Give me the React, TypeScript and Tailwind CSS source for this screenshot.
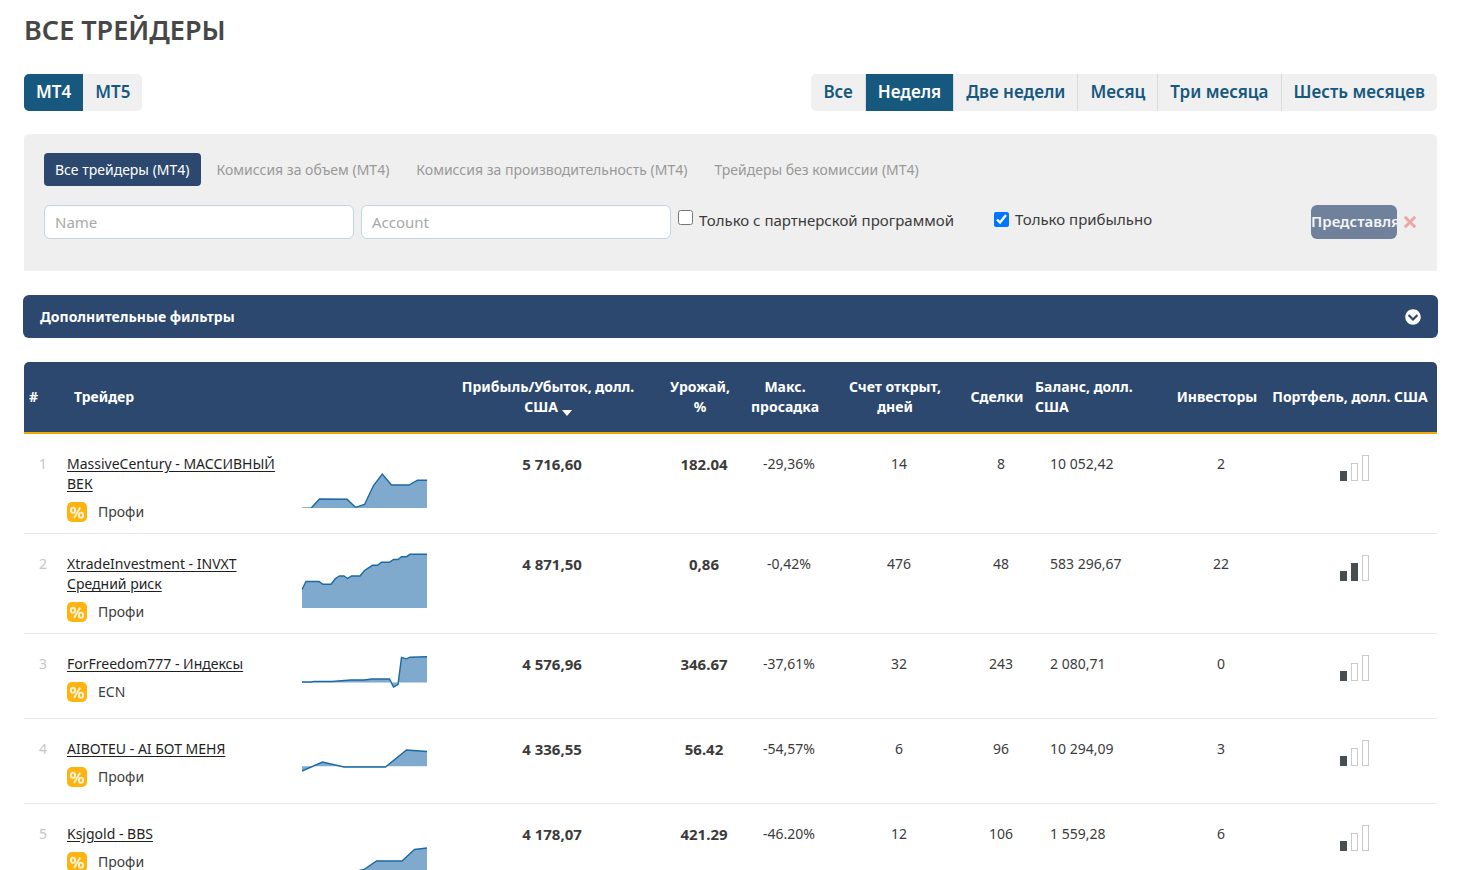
import { useState } from 'react'
import type { ReactNode } from 'react'
import { FaChevronCircleDown } from 'react-icons/fa'

type Trader = {
  name: string
  type: string
  profit: string
  gain: string
  drawdown: string
  days: string
  deals: string
  balance: string
  investors: string
  level: number
  line: string
  base: number
}

// line points and baseline are in the 125x55 box of the sparkline
const traders: Trader[] = [
  {
    name: "MassiveCentury - МАССИВНЫЙ ВЕК",
    type: "Профи",
    profit: "5 716,60",
    gain: "182.04",
    drawdown: "-29,36%",
    days: "14",
    deals: "8",
    balance: "10 052,42",
    investors: "2",
    level: 1,
    line: "0,55.3 9,55.3 17.5,46 45,46.3 53.5,54.3 62.5,51.5 71.5,32.5 80.3,21 89.5,32 107,32 115.5,27.2 125,27.2",
    base: 55,
  },
  {
    name: "XtradeInvestment - INVXT Средний риск",
    type: "Профи",
    profit: "4 871,50",
    gain: "0,86",
    drawdown: "-0,42%",
    days: "476",
    deals: "48",
    balance: "583 296,67",
    investors: "22",
    level: 2,
    line: "0,36.5 4,28.5 17,28.5 21,31.3 29,31.3 33.5,25.5 37.5,23 42,23 45.5,25.5 49.5,23 58,23 62.5,17.5 70.5,12.3 75.5,12.3 79.5,9.3 87.5,9.3 91.5,6.5 96,6.5 99.5,3.7 104.5,3.7 108,1.3 125,1.3",
    base: 55,
  },
  {
    name: "ForFreedom777 - Индексы",
    type: "ECN",
    profit: "4 576,96",
    gain: "346.67",
    drawdown: "-37,61%",
    days: "32",
    deals: "243",
    balance: "2 080,71",
    investors: "0",
    level: 1,
    line: "0,29 9,29 12,28.5 30,28.5 49,27 62,27 70,26 87.5,26 91.5,34 96,31.5 99.5,4.3 104.5,5.8 108,4.2 125,3.8",
    base: 29.5,
  },
  {
    name: "AIBOTEU - AI БОТ МЕНЯ",
    type: "Профи",
    profit: "4 336,55",
    gain: "56.42",
    drawdown: "-54,57%",
    days: "6",
    deals: "96",
    balance: "10 294,09",
    investors: "3",
    level: 1,
    line: "0,33 20.5,24 42,29 83.5,29 104.5,12 125,13.5",
    base: 28.3,
  },
  {
    name: "Ksjgold - BBS",
    type: "Профи",
    profit: "4 178,07",
    gain: "421.29",
    drawdown: "-46.20%",
    days: "12",
    deals: "106",
    balance: "1 559,28",
    investors: "6",
    level: 1,
    line: "0,51 50,49 62,46.5 74.5,38 100,38 112.5,26.5 125,25",
    base: 55,
  },
]

const Sparkline = ({ line, base }: { line: string; base: number }) => (
  <svg width="125" height="55" viewBox="0 0 125 55" className="block">
    <polygon points={`0,${base} ${line} 125,${base}`} fill="#7faacd" />
    <polyline points={line} fill="none" stroke="#1b69a5" strokeWidth="1.4" />
  </svg>
)

const Level = ({ level }: { level: number }) => {
  const bars = [
    { x: 0, h: 10 },
    { x: 11, h: 18 },
    { x: 22, h: 26 },
  ]

  return (
    <svg width="31" height="26" viewBox="0 0 31 26" className="mx-auto block">
      {bars.map(({ x, h }, i) => i < level ? (
        <rect key={x} x={x + 1} y={26 - h} width="7" height={h} fill="#474e52" />
      ) : (
        <rect key={x} x={x + 1.5} y={26.5 - h} width="6" height={h - 1} fill="#fff" stroke="#cbcbcb" />
      ))}
    </svg>
  )
}

const Percent = () => (
  <svg width="20" height="20" viewBox="0 0 20 20" className="shrink-0">
    <rect width="20" height="20" rx="5" fill="#ffb30f" />
    <g fill="none" stroke="#fff3d6" strokeWidth="1.9">
      <ellipse cx="6" cy="8.3" rx="2.1" ry="2.6" />
      <ellipse cx="14" cy="13.2" rx="2.1" ry="2.6" />
      <path d="M13.2 5.4 7 16" />
    </g>
  </svg>
)

const Tab = ({ active, onClick, children }: { active: boolean; onClick: () => void; children: ReactNode }) => (
  <button
    onClick={onClick}
    className={`h-[37px] px-3 text-[17px] font-semibold whitespace-nowrap ${active ? "bg-[#17587f] text-white" : "bg-[#f0f0f0] text-[#17587f]"}`}
  >{children}</button>
)

const periods = ["Все", "Неделя", "Две недели", "Месяц", "Три месяца", "Шесть месяцев"]
const groups = [
  "Все трейдеры (МТ4)",
  "Комиссия за объем (МТ4)",
  "Комиссия за производительность (МТ4)",
  "Трейдеры без комиссии (МТ4)",
]

const App = () => {
  const [platform, setPlatform] = useState("MT4");
  const [period, setPeriod] = useState("Неделя");
  const [group, setGroup] = useState(groups[0]);
  const [name, setName] = useState("");
  const [account, setAccount] = useState("");
  const [partner, setPartner] = useState(false);
  const [profitable, setProfitable] = useState(true);

  const reset = () => {
    setName("");
    setAccount("");
    setPartner(false);
  }

  return (
    <div className="h-screen overflow-hidden bg-white pt-3 pr-[23px] pl-6 font-['Noto_Sans',sans-serif] text-sm text-[#3b3b3b]">
      <h1 className="text-[27px] leading-9 font-semibold text-[#474747]">ВСЕ ТРЕЙДЕРЫ</h1>

      <div className="mt-[26px] flex justify-between">
        <div className="flex overflow-hidden rounded-[5px]">
          {["MT4", "MT5"].map((p) => (
            <Tab key={p} active={p === platform} onClick={() => setPlatform(p)}>{p}</Tab>
          ))}
        </div>
        <div className="flex divide-x divide-[#d5dde3] overflow-hidden rounded-[5px]">
          {periods.map((p) => (
            <Tab key={p} active={p === period} onClick={() => setPeriod(p)}>{p}</Tab>
          ))}
        </div>
      </div>

      <div className="mt-[23px] rounded-t-[5px] bg-[#efefef] px-5 pt-[19px] pb-8">
        <div className="flex gap-[5px]">
          {groups.map((g) => (
            <button
              key={g}
              onClick={() => setGroup(g)}
              className={`h-[33px] rounded px-[11px] whitespace-nowrap ${g === group ? "bg-[#2c486e] text-white" : "text-[#999]"}`}
            >{g}</button>
          ))}
        </div>
        <div className="mt-[19px] flex items-start">
          <input
            value={name}
            onChange={({ target: { value } }) => setName(value)}
            aria-label="Name"
            className="h-[34px] w-[310px] rounded-md border border-[#c3d4de] bg-white px-[10px] text-[15px] placeholder:text-[#a9a9a9]"
            placeholder="Name"
          />
          <input
            value={account}
            onChange={({ target: { value } }) => setAccount(value)}
            aria-label="Account"
            className="ml-[7px] h-[34px] w-[310px] rounded-md border border-[#c3d4de] bg-white px-[10px] text-[15px] placeholder:text-[#a9a9a9]"
            placeholder="Account"
          />
          <label className="ml-[7px] flex items-start gap-[6px] pt-[5px] text-[15px] leading-5 whitespace-nowrap">
            <input type="checkbox" checked={partner} onChange={() => setPartner(!partner)} className="size-[15px]" />
            Только с партнерской программой
          </label>
          <label className="ml-10 flex items-center gap-[6px] pt-1 text-[15px] leading-5 whitespace-nowrap">
            <input type="checkbox" checked={profitable} onChange={() => setProfitable(!profitable)} className="size-[15px]" />
            Только прибыльно
          </label>
          <button className="ml-auto flex h-[34px] w-[86px] items-center overflow-hidden rounded-md bg-[#70819b] text-[15px] font-semibold text-[#f4f5f7]">Представля</button>
          <button onClick={reset} aria-label="Сбросить" className="ml-[6px] flex h-[34px] items-center">
            <svg width="14" height="14" viewBox="0 0 14 14">
              <path d="M1.8 1.8 12.2 12.2M12.2 1.8 1.8 12.2" stroke="#eba7a5" strokeWidth="3" />
            </svg>
          </button>
        </div>
      </div>

      <button className="-mx-px mt-6 flex h-[43px] w-[calc(100%+2px)] items-center justify-between rounded-md bg-[#2c486e] px-[17px] font-bold text-white">
        Дополнительные фильтры
        <FaChevronCircleDown size={16} />
      </button>

      <table className="mt-6 w-full table-fixed border-separate border-spacing-0">
        <colgroup>
          <col className="w-[30px]" />
          <col />
          <col className="w-[152px]" />
          <col className="w-[216px]" />
          <col className="w-[88px]" />
          <col className="w-[82px]" />
          <col className="w-[138px]" />
          <col className="w-[66px]" />
          <col className="w-[141px]" />
          <col className="w-[92px]" />
          <col className="w-[174px]" />
        </colgroup>
        <thead>
          <tr className="text-center leading-5 text-white *:h-[72px] *:border-b-2 *:border-[#f0ab00] *:bg-[#2c486e] *:px-[5px] *:font-bold">
            <th className="rounded-tl-[5px] text-left">#</th>
            <th colSpan={2} className="text-left"><span className="pl-[15px]">Трейдер</span></th>
            <th>
              <span className="mx-auto block w-[190px]">
                Прибыль/Убыток, долл. США
                <svg width="10" height="6" viewBox="0 0 10 6" className="ml-1 inline-block align-text-bottom"><path d="M0 0h10L5 6z" fill="#fff" /></svg>
              </span>
            </th>
            <th>Урожай,<br />%</th>
            <th>Макс. просадка</th>
            <th>Счет открыт,<br />дней</th>
            <th className="whitespace-nowrap">Сделки</th>
            <th className="text-left">Баланс, долл.<br />США</th>
            <th className="whitespace-nowrap">Инвесторы</th>
            <th className="rounded-tr-[5px] whitespace-nowrap">Портфель, долл. США</th>
          </tr>
        </thead>
        <tbody>
          {traders.map((t, i) => (
            <tr key={t.name} className="text-center align-top leading-5 *:border-b *:border-[#e8e8e8]">
              <td className="pt-5 pr-[7px] text-right text-[#c6c6c6]">{i + 1}</td>
              <td className="pt-5 pb-[11px] pl-[13px] text-left">
                <a href="#" className="block text-[#1f1f1f] underline underline-offset-2">{t.name}</a>
                <div className="mt-2 flex items-center gap-[11px]">
                  <Percent />
                  {t.type}
                </div>
              </td>
              <td className="pt-[19px] pb-[10px] pl-[14px]">
                <Sparkline line={t.line} base={t.base} />
              </td>
              <td className="pt-5 pl-2 text-[15px] font-bold">{t.profit}</td>
              <td className="pt-5 pl-2 text-[15px] font-bold">{t.gain}</td>
              <td className="pt-5 pl-2">{t.drawdown}</td>
              <td className="pt-5 pl-2">{t.days}</td>
              <td className="pt-5 pl-2">{t.deals}</td>
              <td className="pt-5 pl-5 text-left">{t.balance}</td>
              <td className="pt-5 pl-2">{t.investors}</td>
              <td className="pt-[21px] pl-2"><Level level={t.level} /></td>
            </tr>
          ))}
        </tbody>
      </table>
    </div>
  )
}

export default App
